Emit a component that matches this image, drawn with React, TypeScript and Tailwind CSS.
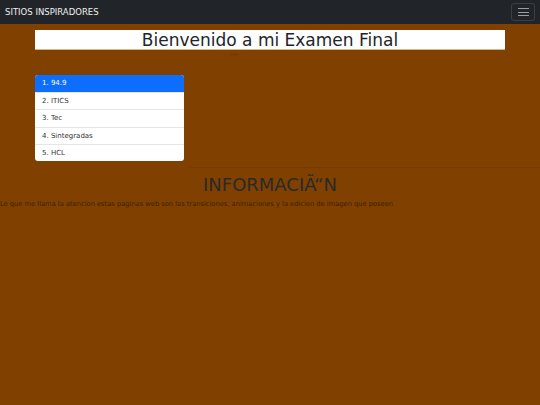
const sitios = ["1. 94.9", "2. ITICS", "3. Tec", "4. Sintegradas", "5. HCL"];

export default function App() {
  return (
    <div className="min-h-[405px] bg-[#804000] font-['DejaVu_Sans',sans-serif] text-[#212529]">
      {/* Navbar */}
      <nav className="flex h-[24px] items-center justify-between bg-[#212529] pl-[5px] pr-[5px]">
        <span className="text-[8.5px] text-[#f0f0f0]">SITIOS INSPIRADORES</span>
        <button className="flex h-[18px] w-[24px] flex-col items-center justify-center gap-[2.5px] rounded-[3px] border border-[#3a3f44]">
          <span className="h-px w-[11px] bg-[#9a9da0]" />
          <span className="h-px w-[11px] bg-[#9a9da0]" />
          <span className="h-px w-[11px] bg-[#9a9da0]" />
        </button>
      </nav>

      {/* Titulo */}
      <div className="px-[35px] pt-[6px]">
        <h1 className="h-[20px] border-b border-[#d9b48a] bg-white text-center text-[17px] leading-[20px]">
          Bienvenido a mi Examen Final
        </h1>
      </div>

      <div className="flex h-[8px] justify-center pt-[3px]">
        <span className="ml-[-72px] text-[2px] text-[#5a2d00]">imagen</span>
      </div>

      {/* Lista */}
      <div className="flex px-[35px] pt-[17px]">
        <ul className="w-[149px] shrink-0 overflow-hidden rounded-[3px] bg-white">
          {sitios.map((s, i) => (
            <li
              key={s}
              className={
                i === 0
                  ? "h-[17px] bg-[#0d6efd] pl-[7px] text-[7px] leading-[17px] text-white"
                  : "h-[17.25px] border-t border-[#e5e5e5] pl-[7px] text-[7px] leading-[16px] text-[#333]"
              }
            >
              {s}
            </li>
          ))}
        </ul>
      </div>
      <div className="flex justify-end pt-[6px]">
        <hr className="w-[350px] border-t border-[#743c04]" />
      </div>

      {/* Informacion */}
      <h2 className="pt-[6px] text-center text-[18px] leading-[22px] text-[#2a2a2a]">INFORMACIÃ“N</h2>
      <p className="mt-[3px] text-[6.7px] leading-[10px] text-[#3a2000]">
        Lo que me llama la atencion estas paginas web son las transiciones, animaciones y la edicion de imagen que poseen
      </p>
    </div>
  );
}
